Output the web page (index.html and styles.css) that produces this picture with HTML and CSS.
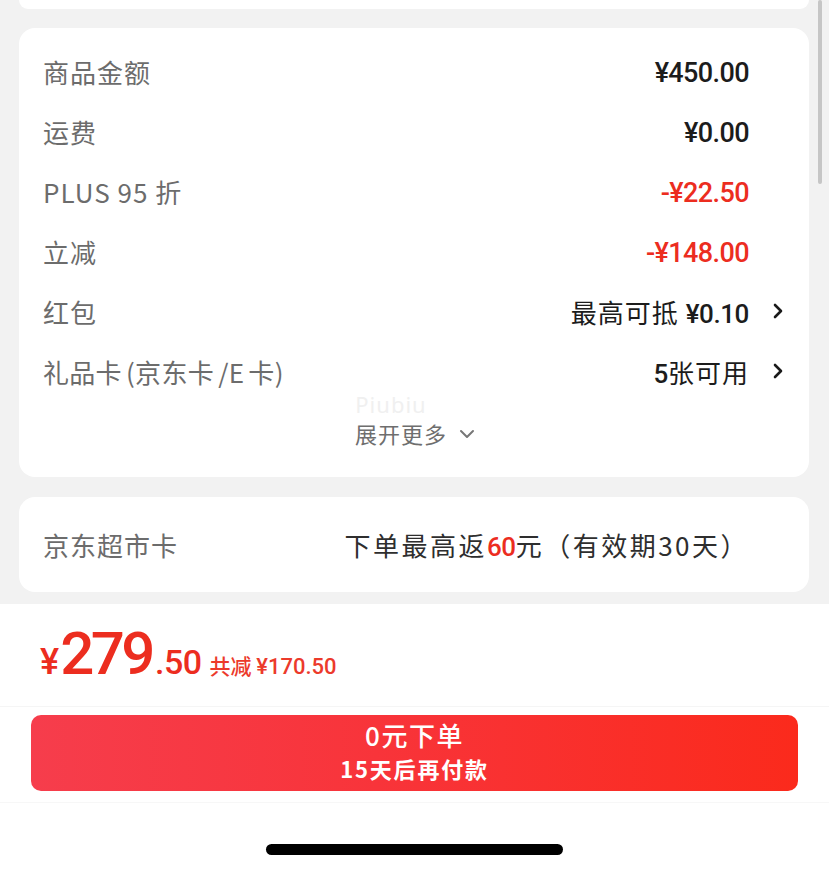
FILE: index.html
```html
<!DOCTYPE html>
<html lang="zh-CN">
<head>
<meta charset="utf-8">
<title>订单结算</title>
<link rel="stylesheet" href="styles.css">
</head>
<body>
<div class="page">
  <div class="scroll">
    <div class="card card-top"></div>
    <div class="card card-detail">
      <div class="row">
        <span class="label">商品金额</span>
        <span class="value num">¥450.00</span>
        <span class="arrow-slot"></span>
      </div>
      <div class="row">
        <span class="label">运费</span>
        <span class="value num">¥0.00</span>
        <span class="arrow-slot"></span>
      </div>
      <div class="row">
        <span class="label">PLUS 95 折</span>
        <span class="value num red">-¥22.50</span>
        <span class="arrow-slot"></span>
      </div>
      <div class="row">
        <span class="label">立减</span>
        <span class="value num red">-¥148.00</span>
        <span class="arrow-slot"></span>
      </div>
      <div class="row">
        <span class="label">红包</span>
        <span class="value cjk">最高可抵 <span class="num-in">¥0.10</span></span>
        <span class="arrow-slot"><svg class="chev" viewBox="0 0 10 16" width="10" height="16"><path d="M2 2 L8 8 L2 14" fill="none" stroke="#1a1a1a" stroke-width="2.6" stroke-linecap="round" stroke-linejoin="round"/></svg></span>
      </div>
      <div class="row">
        <span class="label label-tight">礼品卡 (京东卡 /E 卡)</span>
        <span class="value cjk"><span class="num-in">5</span>张可用</span>
        <span class="arrow-slot"><svg class="chev" viewBox="0 0 10 16" width="10" height="16"><path d="M2 2 L8 8 L2 14" fill="none" stroke="#1a1a1a" stroke-width="2.6" stroke-linecap="round" stroke-linejoin="round"/></svg></span>
      </div>
      <div class="more">
        <span class="watermark">Piubiu</span>
        <span class="more-text">展开更多<svg class="down" viewBox="0 0 16 10" width="16" height="10"><path d="M2 2 L8 8 L14 2" fill="none" stroke="#777" stroke-width="2" stroke-linecap="round" stroke-linejoin="round"/></svg></span>
      </div>
    </div>
    <div class="card card-market">
      <span class="label">京东超市卡</span>
      <span class="market-value">下单最高返<span class="red">60</span>元（有效期30天）</span>
    </div>
  </div>
  <div class="bottom">
    <div class="total">
      <span class="yen">¥</span><span class="int">279</span><span class="dec">.50</span>
      <span class="saved">共减 <span class="saved-num">¥170.50</span></span>
    </div>
    <div class="btn-wrap">
      <div class="pay-btn">
        <span class="btn-main">0元下单</span>
        <span class="btn-sub">15天后再付款</span>
      </div>
    </div>
    <div class="home-area">
      <div class="home-indicator"></div>
    </div>
  </div>
  <div class="scrollbar"></div>
</div>
</body>
</html>
```

FILE: styles.css
```css
* { box-sizing: border-box; }
html, body { margin: 0; padding: 0; }
body {
  background: #f2f2f2;
  font-family: "Noto Sans CJK SC", "Noto Sans", sans-serif;
  width: 829px;
  height: 871px;
  overflow: hidden;
}
.page {
  position: relative;
  width: 829px;
  height: 871px;
  display: flex;
  flex-direction: column;
}
.scroll {
  height: 604px;
  padding: 0 20px 0 19px;
  display: flex;
  flex-direction: column;
  background: #f2f2f2;
}
.card {
  background: #fff;
  border-radius: 16px;
}
.card-top {
  height: 9px;
  border-radius: 0 0 16px 16px;
}
.card-detail {
  margin-top: 19px;
  height: 449px;
  padding: 13px 26px 0 24px;
  display: flex;
  flex-direction: column;
}
.row {
  height: 60px;
  display: flex;
  align-items: center;
}
.label {
  font-size: 26px;
  color: #6c6c6c;
  letter-spacing: 1px;
}
.label-tight {
  letter-spacing: 0.3px;
  word-spacing: -2px;
}
.value {
  margin-left: auto;
  color: #1c1c1c;
}
.num {
  font-family: "Roboto", "Noto Sans", sans-serif;
  font-weight: 500;
  font-size: 27px;
  letter-spacing: -0.6px;
  padding-top: 4px;
}
.cjk {
  font-size: 26px;
  letter-spacing: 1px;
}
.num-in {
  font-family: "Roboto", "Noto Sans", sans-serif;
  font-weight: 500;
  font-size: 26px;
  letter-spacing: -0.4px;
}
.red { color: #ec2d1f; }
.arrow-slot {
  width: 34px;
  display: flex;
  justify-content: flex-end;
  align-items: center;
}
.chev { display: block; }
.more {
  display: flex;
  flex-direction: column;
  align-items: center;
  margin-top: -8px;
  padding-left: 4px;
}
.watermark {
  font-family: "Noto Sans", sans-serif;
  font-size: 22px;
  color: #f0f0f0;
  line-height: 22px;
  margin-left: -48px;
  margin-bottom: 5px;
  letter-spacing: 1px;
}
.more-text {
  font-size: 22px;
  color: #6e6e6e;
  line-height: 26px;
  display: flex;
  align-items: center;
  gap: 12px;
  letter-spacing: 1px;
}
.down { display: block; margin-top: 2px; }
.card-market {
  margin-top: 20px;
  height: 95px;
  padding: 0 60px 0 24px;
  display: flex;
  align-items: center;
  justify-content: space-between;
}
.market-value {
  font-size: 26px;
  color: #2e2e2e;
  letter-spacing: 2.5px;
}
.market-value .red {
  font-family: "Roboto", sans-serif;
  font-weight: 500;
  letter-spacing: -0.5px;
}
.bottom {
  flex: 1;
  background: #fff;
  display: flex;
  flex-direction: column;
}
.total {
  height: 103px;
  padding: 12px 0 0 40px;
  display: flex;
  align-items: baseline;
  color: #ec2d1f;
  font-family: "Roboto", "Noto Sans", sans-serif;
  font-weight: 500;
  border-bottom: 1px solid #f5f5f5;
  line-height: 76px;
}
.yen { font-size: 36px; margin-right: 1px; }
.int { font-size: 60px; letter-spacing: -3.5px; }
.dec { font-size: 34px; margin-left: 3px; letter-spacing: -0.5px; }
.saved {
  font-family: "Noto Sans CJK SC", sans-serif;
  font-weight: 500;
  font-size: 21px;
  margin-left: 8px;
  color: #ec3a2b;
}
.saved-num {
  font-family: "Roboto", sans-serif;
  font-weight: 500;
  font-size: 22px;
}
.btn-wrap {
  height: 96px;
  padding: 8px 31px 0 31px;
  border-bottom: 1px solid #f7f7f7;
}
.pay-btn {
  height: 76px;
  border-radius: 10px;
  background: linear-gradient(90deg, #f63d4c 0%, #f8343a 45%, #fb2a1c 100%);
  display: flex;
  flex-direction: column;
  align-items: center;
  justify-content: center;
  color: #fff;
}
.btn-main {
  font-size: 26px;
  font-weight: 500;
  line-height: 32px;
  letter-spacing: 1.5px;
  margin-top: -4px;
}
.btn-sub {
  font-size: 22px;
  font-weight: 700;
  line-height: 30px;
  letter-spacing: 1.8px;
  margin-top: 2px;
}
.home-area {
  flex: 1;
  display: flex;
  justify-content: center;
  padding-top: 41px;
}
.home-indicator {
  width: 297px;
  height: 11px;
  border-radius: 6px;
  background: #000;
}
.scrollbar {
  position: absolute;
  left: 818px;
  top: 0;
  width: 4px;
  height: 184px;
  background: #c6c6c6;
  border-radius: 2px;
}
```
